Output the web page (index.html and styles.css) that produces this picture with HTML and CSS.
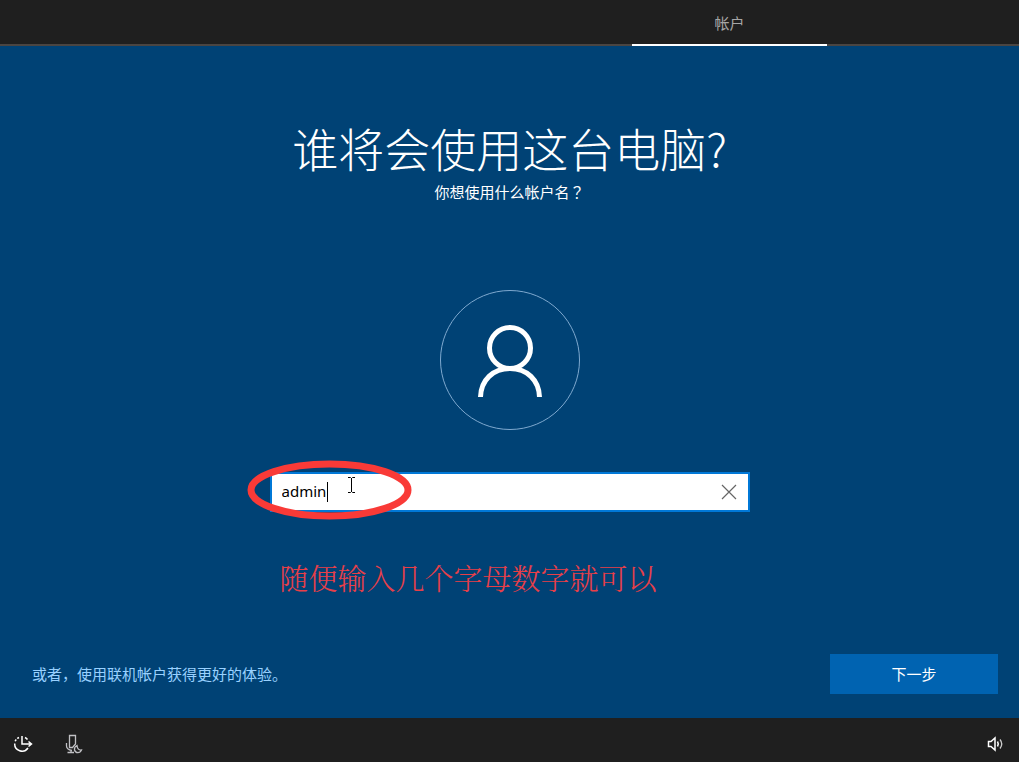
FILE: index.html
```
<!DOCTYPE html>
<html lang="zh-CN">
<head>
  <meta charset="UTF-8">
  <meta name="viewport" content="width=device-width, initial-scale=1.0">
  <title>帐户</title>
  <link rel="stylesheet" href="styles.css">
</head>
<body>
  <header class="topbar">
    <a class="tab active" href="#account">帐户</a>
  </header>
  <main class="page" id="account">
    <h1>谁将会使用这台电脑?</h1>
    <label class="subtitle" for="username">你想使用什么帐户名<span class="mark" lang="zh-TW">？</span></label>
    <div class="avatar">
      <svg width="70" height="76" viewBox="0 0 70 76" fill="none" stroke="#fff" stroke-width="5">
        <circle cx="35" cy="26" r="20.5"/>
        <path d="M5.500 75C6 58 18 46.500 35 46.500S64 58 64.500 75"/>
      </svg>
    </div>
    <div class="field">
      <input type="text" id="username" value="admin" autocomplete="off">
      <button class="clear" type="button" aria-label="清除">
        <svg width="16" height="16" viewBox="0 0 16 16" stroke="#666" stroke-width="1.2"><path d="M1 1L15 15M15 1L1 15"/></svg>
      </button>
      <span class="caret"></span>
      <svg class="pointer" width="9" height="18" viewBox="0 0 9 18" fill="none" stroke="#000"><path d="M1 1.500H3.500L4.500 2.500L5.500 1.500H8M4.500 2V16M1 16.500H3.500L4.500 15.500L5.500 16.500H8"/></svg>
      <svg class="ring" width="166" height="60" viewBox="0 0 166 60" fill="none" stroke="#f93a37" stroke-width="7"><ellipse cx="82.500" cy="30" rx="78.500" ry="26"/></svg>
    </div>
    <p class="note">随便输入几个字母数字就可以</p>
    <div class="actions">
      <a class="online" href="#online">或者，使用联机帐户获得更好的体验。</a>
      <button class="next" type="button">下一步</button>
    </div>
  </main>
  <footer class="bottombar">
    <button class="tool" type="button" aria-label="轻松使用">
      <svg width="20" height="18" viewBox="0 0 20 18" fill="none" stroke="#fff" stroke-width="1.500">
        <path d="M9 1V9H18M15.500 6.500L18.500 9L15.500 11.500"/>
        <path d="M6 2.500A7.300 7.300 0 0 0 1.800 7" stroke-dasharray="2 1.300"/>
        <path d="M1.700 8.500A7.300 7.300 0 0 0 15 13"/>
        <path d="M12 2.500A7 7 0 0 1 14.500 4.500"/>
      </svg>
    </button>
    <button class="tool" type="button" aria-label="语音">
      <svg width="18" height="20" viewBox="0 0 18 20" fill="none" stroke="#c0c0c4" stroke-width="1.300">
        <path d="M4.500 1.500H10.500V10L7.500 13.500H4.500Z"/>
        <path d="M1.500 9V12Q1.500 15.500 7 16.500M6 16V18.500M2.500 18.500H9"/>
        <path d="M12 11.500Q9 13 9.500 16C10.500 19.500 15 19.500 16.500 16Q12.500 16.500 12 11.500Z"/>
      </svg>
    </button>
    <button class="tool volume" type="button" aria-label="音量">
      <svg width="18" height="16" viewBox="0 0 18 16" fill="none" stroke="#fff" stroke-width="1.500">
        <path d="M1.500 5.500H4L8 2V14L4 10.500H1.500Z"/>
        <path d="M10.500 5.500Q12 8 10.500 10.500"/>
        <path d="M13 3.500Q16.500 8 13 12.500" stroke="#ccc" stroke-width="1.300"/>
      </svg>
    </button>
  </footer>
</body>
</html>
```
FILE: styles.css
```
* { box-sizing: border-box; }
body { margin: 0; min-height: 100vh; display: flex; flex-direction: column; background: #004275; color: #fff; font-family: "Noto Sans", "Noto Sans CJK SC", sans-serif; font-size: 15px; line-height: 20px; }
button { border: 0; padding: 0; background: none; color: inherit; font: inherit; cursor: pointer; }
svg { display: block; }

.topbar { display: flex; justify-content: flex-end; height: 46px; padding-right: 192px; background: #1f1f1f; box-shadow: inset 0 -2px #4a4542; }
.tab { width: 195px; padding-top: 13px; color: #a6a6a6; text-align: center; text-decoration: none; }
.tab.active { border-bottom: 2px solid #fff; }

.page { flex: 1; display: flex; flex-direction: column; align-items: center; padding-top: 70px; }
h1 { margin: 0 0 4px; font-family: "Noto Sans CJK SC", sans-serif; font-size: 46px; font-weight: 300; line-height: 62px; }
.subtitle { font-family: "Noto Sans CJK SC", sans-serif; }
.mark { font-family: "Noto Sans CJK TC", sans-serif; }
.avatar { display: flex; align-items: center; justify-content: center; width: 140px; height: 140px; margin-top: 88px; border: 1px solid #7fa9cf; border-radius: 50%; }
.field { position: relative; display: flex; width: 480px; max-width: 100%; height: 40px; margin-top: 42px; border: 2px solid #0078d7; background: #fff; }
.field input { flex: 1; min-width: 0; padding: 0 10px 2px; border: 0; outline: 0; background: none; color: #000; font: inherit; }
.clear { display: flex; align-items: center; justify-content: center; width: 38px; }
.caret { position: absolute; left: 55px; top: 8px; width: 1px; height: 20px; background: #000; }
.pointer { position: absolute; left: 75px; top: 2px; }
.ring { position: absolute; left: -25px; top: -14px; pointer-events: none; }
.note { width: 480px; margin: 46px 0 0; padding-left: 10px; color: #e83f48; font-family: "Noto Serif CJK SC", "Noto Sans CJK SC", serif; font-size: 29px; font-weight: 300; line-height: 40px; }
.actions { display: flex; align-items: center; justify-content: space-between; align-self: stretch; margin-top: auto; padding: 0 21px 24px 32px; }
.online { color: #99d1ff; text-decoration: none; }
.next { width: 168px; height: 40px; background: #0063b1; }

.bottombar { display: flex; align-items: center; gap: 32px; height: 44px; padding: 8px 14px 0 13px; background: #1f1f1f; }
.volume { margin-left: auto; }
```
